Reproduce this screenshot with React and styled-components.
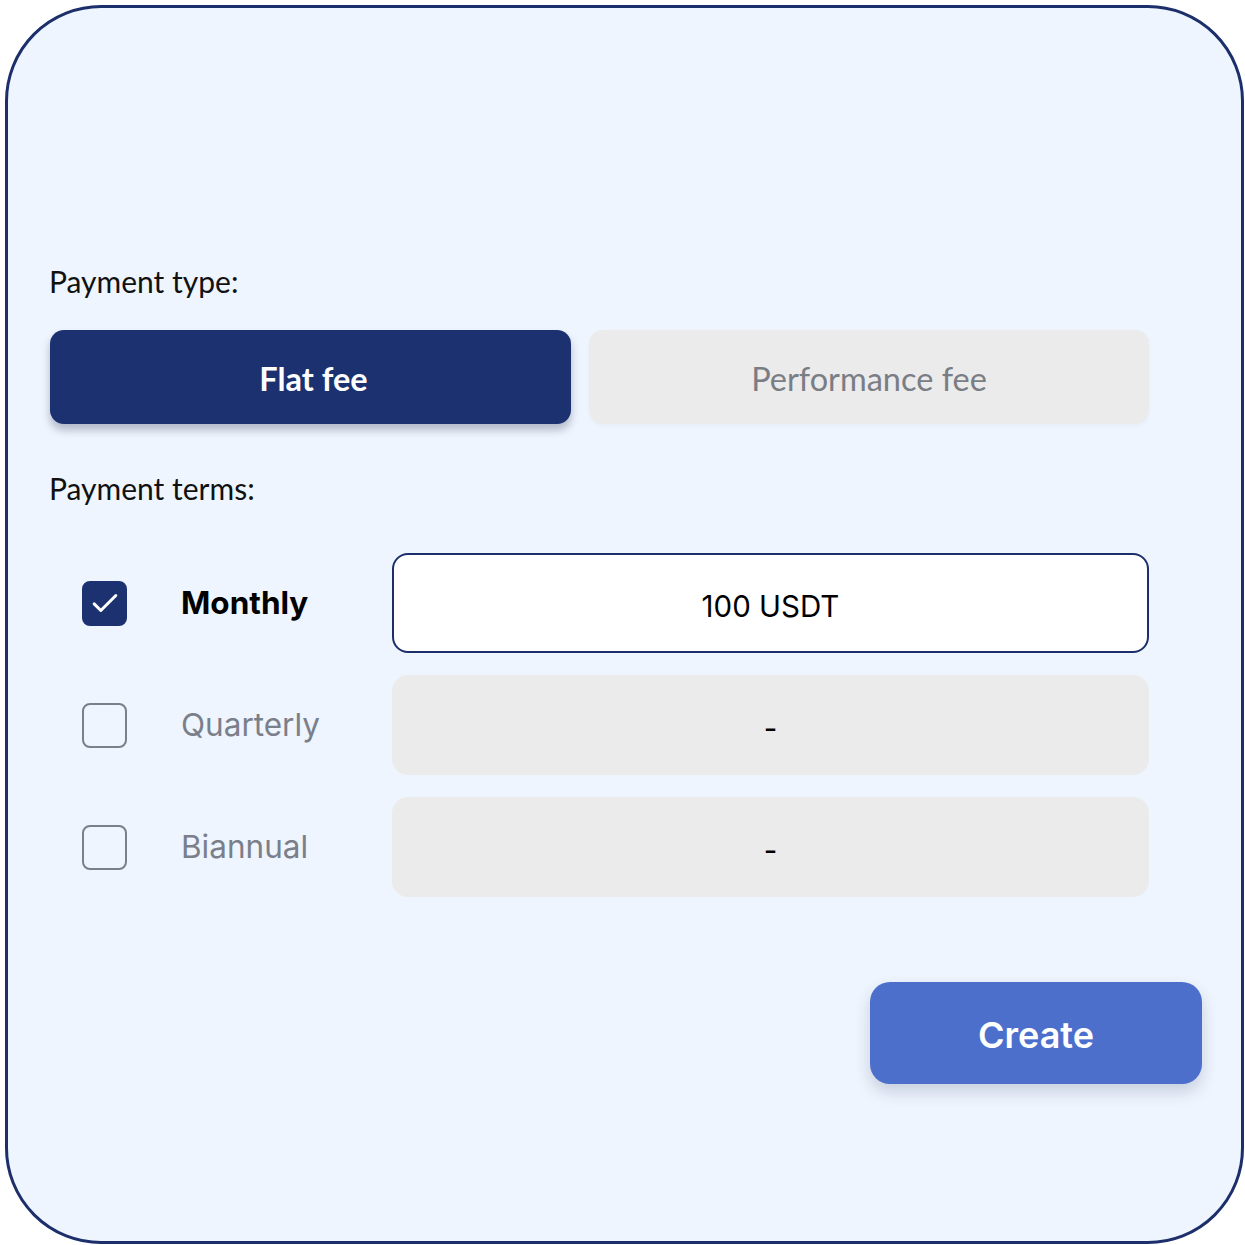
import React from 'react';
import styled, { createGlobalStyle } from 'styled-components';

const GlobalStyle = createGlobalStyle`
    body {
        margin: 0;
        background: #ffffff;
    }
`;

const terms = [
    { name: 'Monthly', value: '100 USDT', checked: true },
    { name: 'Quarterly', value: '-', checked: false },
    { name: 'Biannual', value: '-', checked: false },
];

const App = () => {
    return (
        <>
            <GlobalStyle />
            <Card>
                <Label>Payment type:</Label>
                <TypeRow>
                    <TypeButton active>Flat fee</TypeButton>
                    <TypeButton>Performance fee</TypeButton>
                </TypeRow>
                <Label>Payment terms:</Label>
                <Terms>
                    {terms.map((t) => (
                        <TermRow key={t.name}>
                            <Check checked={t.checked}>
                                {t.checked && (
                                    <svg width="40" height="40" viewBox="0 0 24 24" fill="none">
                                        <path d="M5.5 12.5l4 4L18.5 7.5" stroke="#fff" strokeWidth="1.8" strokeLinecap="round" strokeLinejoin="round" />
                                    </svg>
                                )}
                            </Check>
                            <TermName checked={t.checked}>{t.name}</TermName>
                            <Amount checked={t.checked}>{t.value}</Amount>
                        </TermRow>
                    ))}
                </Terms>
                <Footer>
                    <CreateButton>Create</CreateButton>
                </Footer>
            </Card>
        </>
    );
};

export default App;


const Card = styled.div`
    box-sizing: border-box;
    width: 1239px;
    height: 1239px;
    margin: 5px 0 0 5px;
    border: 3px solid #1c2f6b;
    border-radius: 96px;
    background: #eef5fe;
    padding: 255px 0 0 41px;
    display: flex;
    flex-direction: column;
`;
const Label = styled.div`
    font-family: Lato, "Liberation Sans", sans-serif;
    font-size: 30px;
    line-height: 36px;
    color: #111111;
`;
const TypeRow = styled.div`
    display: flex;
    gap: 18px;
    margin: 31px 0 46px 1px;
`;
const TypeButton = styled.div`
    box-sizing: border-box;
    height: 94px;
    width: ${(p) => (p.active ? '521px' : '560px')};
    border-radius: 14px;
    display: flex;
    align-items: center;
    justify-content: center;
    padding: 2px 0 0 ${(p) => (p.active ? '6px' : '0')};
    font-family: Lato, "Liberation Sans", sans-serif;
    font-size: 32.5px;
    font-weight: ${(p) => (p.active ? 700 : 400)};
    color: ${(p) => (p.active ? '#ffffff' : '#7a7d84')};
    background: ${(p) => (p.active ? '#1c3170' : '#ebebeb')};
    box-shadow: ${(p) => (p.active ? '0 6px 8px rgba(20, 30, 60, 0.28)' : '0 2px 4px rgba(0, 0, 0, 0.03)')};
`;
const Terms = styled.div`
    display: flex;
    flex-direction: column;
    gap: 22px;
    margin-top: 47px;
`;
const TermRow = styled.div`
    display: grid;
    grid-template-columns: 99px 211px 757px;
    align-items: center;
    height: 100px;
    padding-left: 33px;
`;
const Check = styled.div`
    box-sizing: border-box;
    width: 45px;
    height: 45px;
    border-radius: 8px;
    border: 2px solid ${(p) => (p.checked ? '#1c3170' : '#7a7f8a')};
    background: ${(p) => (p.checked ? '#1c3170' : 'transparent')};
    display: flex;
    align-items: center;
    justify-content: center;
`;
const TermName = styled.div`
    font-family: Inter, "Liberation Sans", sans-serif;
    font-size: 31.5px;
    font-weight: ${(p) => (p.checked ? 700 : 400)};
    color: ${(p) => (p.checked ? '#000000' : '#7a7f8a')};
    margin-top: -2px;
`;
const Amount = styled.div`
    box-sizing: border-box;
    height: 100px;
    border-radius: 16px;
    border: ${(p) => (p.checked ? '2px solid #1c2f6b' : 'none')};
    background: ${(p) => (p.checked ? '#ffffff' : '#ebebeb')};
    display: flex;
    align-items: center;
    justify-content: center;
    font-family: Inter, "Liberation Sans", sans-serif;
    font-size: 29.5px;
    color: #000000;
    padding-top: 6px;
`;
const Footer = styled.div`
    display: flex;
    justify-content: flex-end;
    padding-right: 39px;
    margin-top: 85px;
`;
const CreateButton = styled.div`
    width: 332px;
    height: 102px;
    border-radius: 20px;
    background: #4c6fcc;
    color: #ffffff;
    font-family: Inter, "Liberation Sans", sans-serif;
    font-size: 36px;
    font-weight: 600;
    display: flex;
    align-items: center;
    justify-content: center;
    padding-top: 4px;
    box-sizing: border-box;
    box-shadow: 0 8px 16px rgba(30, 40, 80, 0.18);
`;
